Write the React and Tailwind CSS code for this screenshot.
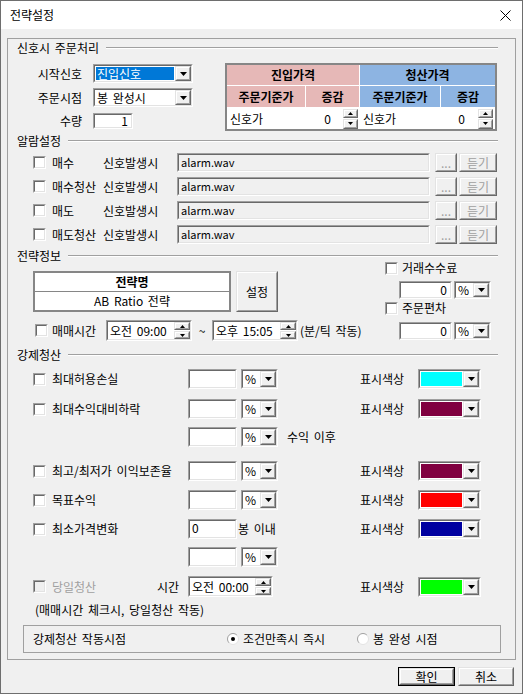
import React from 'react'

// classic win32 3D edges
function Sunken({ className = '', inner = '', children }) {
  return (
    <div className={`shrink-0 border border-t-[#a0a0a0] border-l-[#a0a0a0] border-r-white border-b-white ${className}`}>
      <div className={`h-full w-full border border-t-[#696969] border-l-[#696969] border-r-[#e3e3e3] border-b-[#e3e3e3] ${inner}`}>
        {children}
      </div>
    </div>
  )
}

function Raised({ className = '', inner = '', children }) {
  return (
    <div className={`shrink-0 bg-[#f0f0f0] border border-t-[#e3e3e3] border-l-[#e3e3e3] border-r-[#696969] border-b-[#696969] ${className}`}>
      <div className={`h-full w-full border border-t-white border-l-white border-r-[#a0a0a0] border-b-[#a0a0a0] flex items-center justify-center ${inner}`}>
        {children}
      </div>
    </div>
  )
}

const Down = () => (
  <svg width="7" height="4" viewBox="0 0 7 4"><path d="M0 0h7L3.5 4z" fill="#000" /></svg>
)
const SpinUp = () => (
  <svg width="5" height="3" viewBox="0 0 5 3"><path d="M0 3h5L2.5 0z" fill="#000" /></svg>
)
const SpinDown = () => (
  <svg width="5" height="3" viewBox="0 0 5 3"><path d="M0 0h5L2.5 3z" fill="#000" /></svg>
)

function Spin({ className = '' }) {
  return (
    <div className={`shrink-0 flex flex-col gap-px ${className}`}>
      <Raised className="flex-1"><SpinUp /></Raised>
      <Raised className="flex-1"><SpinDown /></Raised>
    </div>
  )
}

function Combo({ className = '', children }) {
  return (
    <Sunken className={className} inner="bg-white flex items-stretch">
      <div className="flex-1 min-w-0 flex items-center">{children}</div>
      <Raised className="w-[16px]"><Down /></Raised>
    </Sunken>
  )
}

function ColorBox({ color }) {
  return (
    <Sunken className="w-[63px] h-[20px]" inner="bg-white flex items-stretch">
      <div className="flex-1 p-px">
        <div className={`h-full w-full ${color}`} />
      </div>
      <Raised className="w-[16px]"><Down /></Raised>
    </Sunken>
  )
}

function TimeBox({ className = '', text }) {
  return (
    <Sunken className={className} inner="bg-white flex items-stretch">
      <div className="flex-1 flex items-center pl-[2px]">{text}</div>
      <Spin className="w-[16px]" />
    </Sunken>
  )
}

function Check({ disabled }) {
  return (
    <div className="w-[13px] h-[13px] shrink-0 border border-t-[#a0a0a0] border-l-[#a0a0a0] border-r-white border-b-white">
      <div className={`h-full w-full border border-t-[#696969] border-l-[#696969] border-r-[#e3e3e3] border-b-[#e3e3e3] ${disabled ? 'bg-[#f0f0f0]' : 'bg-white'}`} />
    </div>
  )
}

function Radio({ checked }) {
  return (
    <svg width="12" height="12" viewBox="0 0 12 12" className="shrink-0">
      <circle cx="6" cy="6" r="5.5" fill="#fff" />
      <path d="M2.1 9.9A5.5 5.5 0 0 1 9.9 2.1" fill="none" stroke="#a0a0a0" />
      <path d="M9.9 2.1A5.5 5.5 0 0 1 2.1 9.9" fill="none" stroke="#e3e3e3" />
      {checked && <circle cx="6" cy="6" r="2" fill="#000" />}
    </svg>
  )
}

function Header({ label, className = '' }) {
  return (
    <div className={`flex items-center h-[16px] ${className}`}>
      <span>{label}</span>
      <div className="flex-1 ml-[7px] h-[2px] border-t border-t-[#a0a0a0] border-b border-b-white" />
    </div>
  )
}

function PctInput({ className = '' }) {
  return (
    <div className={`flex ${className}`}>
      <Sunken className="w-[49px] h-[20px]" inner="bg-white" />
      <Combo className="ml-[4px] w-[37px] h-[20px]"><span className="pl-[2px]">%</span></Combo>
    </div>
  )
}

const alarms = ['매수', '매수청산', '매도', '매도청산']

export default function App() {
  return (
    <div className="w-[523px] h-[694px] bg-[#f0f0f0] border border-[#6e6e6e] flex flex-col text-[12px] leading-none text-black font-['Noto_Sans_CJK_KR','Noto_Sans',sans-serif] [word-spacing:2px] select-none">
      {/* title bar */}
      <div className="h-[28px] shrink-0 bg-white flex items-center justify-between pl-[9px] pr-[11px]">
        <span className="text-[12px]">전략설정</span>
        <svg width="11" height="11" viewBox="0 0 11 11">
          <path d="M0.5 0.5l10 10M10.5 0.5l-10 10" stroke="#000" strokeWidth="1" />
        </svg>
      </div>

      <div className="px-[6px] pt-[9px]">
        <div className="h-[622px] border border-[#a0a0a0] pl-[9px] pr-[17px] pt-px">
          {/* 신호시 주문처리 */}
          <Header label="신호시 주문처리" />
          <div className="flex mt-[7px] h-[68px]">
            <div className="w-[208px] flex flex-col">
              <div className="flex items-center h-[19px] mt-px">
                <span className="w-[65px] text-right">시작신호</span>
                <Combo className="ml-[11px] w-[100px] h-[19px]">
                  <span className="m-px self-stretch flex-1 flex items-center bg-[#0078d7] text-white pl-px">진입신호</span>
                </Combo>
              </div>
              <div className="flex items-center h-[19px] mt-[5px]">
                <span className="w-[65px] text-right">주문시점</span>
                <Combo className="ml-[11px] w-[100px] h-[19px]">
                  <span className="pl-[2px]">봉 완성시</span>
                </Combo>
              </div>
              <div className="flex items-center h-[16px] mt-[6px]">
                <span className="w-[65px] text-right">수량</span>
                <Sunken className="ml-[11px] w-[40px] h-[16px]" inner="bg-white flex items-center justify-end pr-[3px]">1</Sunken>
              </div>
            </div>

            <div className="w-[272px] h-[68px] border-2 border-[#868686] bg-white grid grid-cols-[78px_53px_80px_54px] grid-rows-[20px_21px_21px] gap-px font-bold">
              <div className="col-span-2 bg-[#e6b8b7] flex items-center justify-center">진입가격</div>
              <div className="col-span-2 bg-[#8db4e2] flex items-center justify-center">청산가격</div>
              <div className="bg-[#e6b8b7] flex items-center justify-center">주문기준가</div>
              <div className="bg-[#e6b8b7] flex items-center justify-center">증감</div>
              <div className="bg-[#8db4e2] flex items-center justify-center">주문기준가</div>
              <div className="bg-[#8db4e2] flex items-center justify-center">증감</div>
              <div className="font-normal flex items-center pl-[3px]">신호가</div>
              <div className="font-normal flex items-center justify-end">
                <span>0</span>
                <Spin className="ml-[12px] mr-px w-[15px] h-[20px]" />
              </div>
              <div className="font-normal flex items-center pl-[3px]">신호가</div>
              <div className="font-normal flex items-center justify-end">
                <span>0</span>
                <Spin className="ml-[13px] mr-[2px] w-[15px] h-[20px]" />
              </div>
            </div>
          </div>

          {/* 알람설정 */}
          <Header label="알람설정" className="mt-[2px]" />
          <div className="flex flex-col gap-[5px] mt-[4px]">
            {alarms.map(a => (
              <div key={a} className="flex items-center h-[19px] pl-[16px]">
                <Check />
                <span className="ml-[6px] w-[51px]">{a}</span>
                <span className="w-[74px]">신호발생시</span>
                <Sunken className="w-[253px] h-[19px]" inner="bg-[#f0f0f0] flex items-center pl-[2px] text-[11px]">alarm.wav</Sunken>
                <Raised className="ml-[5px] w-[22px] h-[19px]" inner="text-[#a0a0a0]">...</Raised>
                <Raised className="ml-[2px] w-[38px] h-[19px]" inner="text-[#a0a0a0]">듣기</Raised>
              </div>
            ))}
          </div>

          {/* 전략정보 */}
          <Header label="전략정보" className="mt-[4px]" />
          <div className="flex h-[77px]">
            <div className="w-[368px] pl-[16px] pt-[7px]">
              <div className="flex h-[41px]">
                <div className="w-[198px] h-[41px] border-2 border-[#868686] bg-white flex flex-col">
                  <div className="h-[19px] shrink-0 flex items-center justify-center font-bold border-b border-[#868686]">전략명</div>
                  <div className="flex-1 flex items-center justify-center">AB Ratio 전략</div>
                </div>
                <Raised className="ml-[5px] w-[42px] h-[41px]">설정</Raised>
              </div>
              <div className="flex items-center h-[21px] mt-[8px] pl-[2px]">
                <Check />
                <span className="ml-[4px] w-[54px]">매매시간</span>
                <TimeBox className="w-[86px] h-[21px]" text="오전 09:00" />
                <span className="w-[20px] text-center">~</span>
                <TimeBox className="w-[86px] h-[21px]" text="오후 15:05" />
                <span className="ml-[2px]">(분/틱 작동)</span>
              </div>
            </div>
            <div className="-mt-[4px] flex flex-col">
              <div className="flex items-center h-[16px]">
                <Check />
                <span className="ml-[4px]">거래수수료</span>
              </div>
              <div className="flex mt-[5px] pl-[14px]">
                <Sunken className="w-[53px] h-[18px]" inner="bg-white flex items-center justify-end pr-[3px]">0</Sunken>
                <Combo className="ml-[2px] w-[37px] h-[18px]"><span className="pl-[2px]">%</span></Combo>
              </div>
              <div className="flex items-center h-[16px] mt-px">
                <Check />
                <span className="ml-[4px]">주문편차</span>
              </div>
              <div className="flex mt-[6px] pl-[14px]">
                <Sunken className="w-[53px] h-[18px]" inner="bg-white flex items-center justify-end pr-[3px]">0</Sunken>
                <Combo className="ml-[2px] w-[37px] h-[18px]"><span className="pl-[2px]">%</span></Combo>
              </div>
            </div>
          </div>

          {/* 강제청산 */}
          <Header label="강제청산" className="mt-[6px]" />

          <div className="flex items-center h-[20px] pl-[16px] mt-[6px]">
            <Check />
            <span className="ml-[6px] w-[136px]">최대허용손실</span>
            <PctInput />
            <span className="ml-[82px] w-[58px]">표시색상</span>
            <ColorBox color="bg-[#00ffff]" />
          </div>

          <div className="flex items-center h-[20px] pl-[16px] mt-[10px]">
            <Check />
            <span className="ml-[6px] w-[136px]">최대수익대비하락</span>
            <PctInput />
            <span className="ml-[82px] w-[58px]">표시색상</span>
            <ColorBox color="bg-[#800040]" />
          </div>

          <div className="flex items-center h-[20px] pl-[171px] mt-[8px]">
            <PctInput />
            <span className="ml-[9px]">수익 이후</span>
          </div>

          <div className="flex items-center h-[20px] pl-[16px] mt-[14px]">
            <Check />
            <span className="ml-[6px] w-[136px]">최고/최저가 이익보존율</span>
            <PctInput />
            <span className="ml-[82px] w-[58px]">표시색상</span>
            <ColorBox color="bg-[#800040]" />
          </div>

          <div className="flex items-center h-[20px] pl-[16px] mt-[9px]">
            <Check />
            <span className="ml-[6px] w-[136px]">목표수익</span>
            <PctInput />
            <span className="ml-[82px] w-[58px]">표시색상</span>
            <ColorBox color="bg-[#ff0000]" />
          </div>

          <div className="flex items-center h-[20px] pl-[16px] mt-[9px]">
            <Check />
            <span className="ml-[6px] w-[136px]">최소가격변화</span>
            <Sunken className="w-[49px] h-[20px]" inner="bg-white pl-[2px] pt-px">0</Sunken>
            <span className="ml-px w-[122px]">봉 이내</span>
            <span className="w-[58px]">표시색상</span>
            <ColorBox color="bg-[#0000a0]" />
          </div>

          <div className="flex items-center h-[20px] pl-[171px] mt-[8px]">
            <PctInput />
          </div>

          <div className="flex items-center h-[21px] pl-[16px] mt-[9px]">
            <Check disabled />
            <span className="ml-[6px] w-[105px] text-[#a0a0a0]">당일청산</span>
            <span className="w-[31px]">시간</span>
            <TimeBox className="w-[85px] h-[21px]" text="오전 00:00" />
            <span className="ml-[87px] w-[58px]">표시색상</span>
            <ColorBox color="bg-[#00ff00]" />
          </div>

          <div className="flex items-center h-[16px] mt-[5px] pl-[18px]">(매매시간 체크시, 당일청산 작동)</div>

          <div className="ml-[6px] mt-[7px] w-[478px] h-[28px] border border-[#a0a0a0] flex items-center pl-[9px]">
            <span className="w-[194px]">강제청산 작동시점</span>
            <Radio checked />
            <span className="ml-[4px] w-[114px]">조건만족시 즉시</span>
            <Radio />
            <span className="ml-[4px]">봉 완성 시점</span>
          </div>
        </div>

        {/* dialog buttons */}
        <div className="flex justify-end gap-[3px] mt-[7px] pr-[2px]">
          <div className="w-[57px] h-[19px] border border-black">
            <Raised className="w-full h-full">확인</Raised>
          </div>
          <Raised className="w-[56px] h-[19px]">취소</Raised>
        </div>
      </div>
    </div>
  )
}
